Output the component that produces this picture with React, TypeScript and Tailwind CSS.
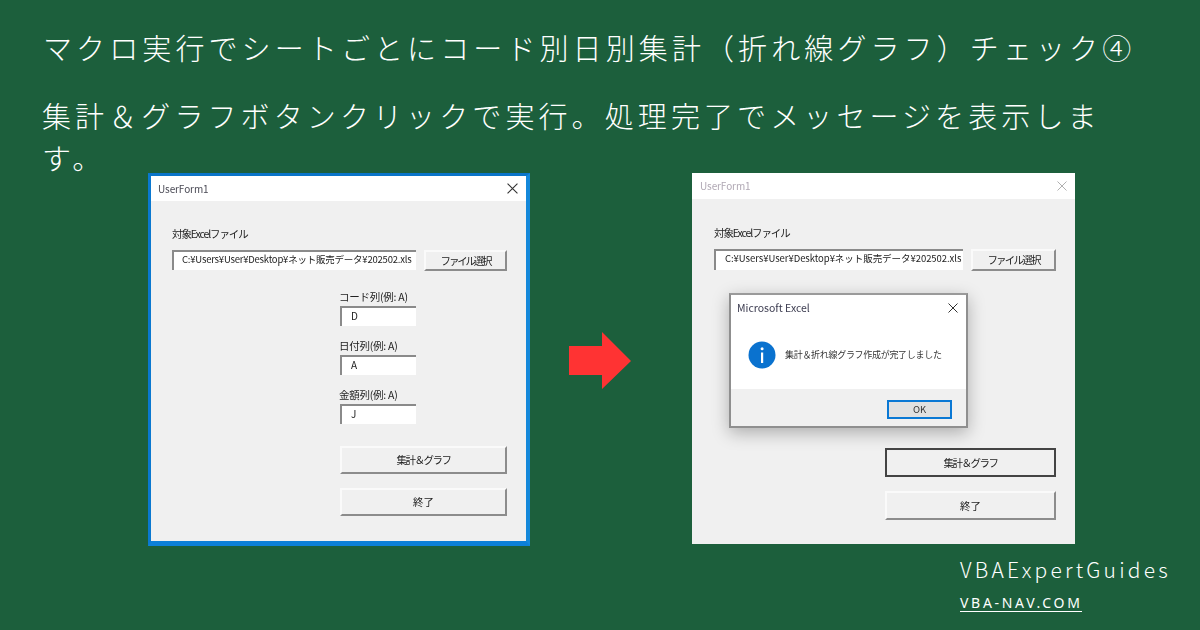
import React from "react";

const jp = "font-['Noto_Sans_CJK_JP','Noto_Sans',sans-serif]";

function Btn({ cls, label, dark }: { cls: string; label: string; dark?: boolean }) {
  return (
    <div
      className={`flex items-center justify-center bg-[#f0f0f0] text-[10.5px] text-[#222] ${
        dark
          ? "border-2 border-[#444]"
          : "border-t-2 border-l-2 border-r-2 border-b-2 border-t-[#fafafa] border-l-[#fafafa] border-r-[#8c8c8c] border-b-[#8c8c8c]"
      } ${cls}`}
    >
      {label}
    </div>
  );
}

function Field({ label, value }: { label: string; value: string }) {
  return (
    <div className="flex flex-col">
      <div className="h-[16px] text-[10.5px] leading-[16px] tracking-[-0.25px] text-[#222] whitespace-nowrap">{label}</div>
      <div className="ml-px mt-[1px] flex h-[20px] w-[76px] items-start border-t-2 border-l-2 border-t-[#8a8a8a] border-l-[#8a8a8a] bg-white pl-[9px] pt-px text-[10px] leading-[14px] text-[#222]">
        {value}
      </div>
    </div>
  );
}

function PathBox({ cls }: { cls: string }) {
  return (
    <div
      className={`overflow-hidden whitespace-nowrap border-t-2 border-l-2 border-t-[#8a8a8a] border-l-[#8a8a8a] bg-white text-[9.5px] leading-[15px] text-[#222] ${cls}`}
    >
      C:¥Users¥User¥Desktop¥ネット販売データ¥202502.xls
    </div>
  );
}

function CloseIcon({ size, color }: { size: number; color: string }) {
  return (
    <svg width={size} height={size} viewBox="0 0 10 10" fill="none" stroke={color} strokeWidth="1">
      <path d="M0.5 0.5 L9.5 9.5 M9.5 0.5 L0.5 9.5" />
    </svg>
  );
}

function LeftWindow() {
  return (
    <div className="h-[373px] w-[382px] shrink-0 border-t-[3px] border-l-[3px] border-r-[4px] border-b-[5px] border-t-[#0a74c8] border-l-[#0a78d0] border-r-[#1488da] border-b-[#0c80d8] bg-[#f0f0f0]">
      <div className="flex h-[25px] items-center justify-between bg-white pl-[7px] pr-[8px]">
        <span className="text-[10px] tracking-[-0.1px] text-[#4a4a55]">UserForm1</span>
        <CloseIcon size={11} color="#333" />
      </div>
      <div className="flex flex-col pl-[21px] pt-[26px]">
        <div className="h-[14px] text-[10.5px] leading-[14px] tracking-[-1.1px] text-[#222]">対象Excelファイル</div>
        <div className="mt-[9px] flex items-start">
          <PathBox cls="h-[20px] w-[244px] pl-[8px] tracking-[-0.22px]" />
          <Btn cls="ml-[8px] h-[21px] w-[83px] tracking-[-2.2px]" label="ファイル選択" />
        </div>
        <div className="ml-[167px] mt-[18px] flex flex-col gap-[12px]">
          <Field label="コード列(例: A)" value="D" />
          <Field label="日付列(例: A)" value="A" />
          <Field label="金額列(例: A)" value="J" />
          <Btn cls="ml-px mt-[10px] h-[28px] w-[167px] tracking-[-1.5px]" label="集計＆グラフ" />
          <Btn cls="ml-px mt-[2px] h-[28px] w-[167px]" label="終了" />
        </div>
      </div>
    </div>
  );
}

function Dialog() {
  return (
    <div className="absolute left-[37px] top-[120px] h-[135px] w-[239px] border-2 border-[#8f8f8f] border-t-[#9a9a9a] bg-white shadow-[0_5px_16px_rgba(0,0,0,0.28)]">
      <div className="flex h-[25px] items-center justify-between pl-[6px] pr-[8px]">
        <span className="text-[10.5px] text-[#3c3c50]">Microsoft Excel</span>
        <CloseIcon size={10} color="#333" />
      </div>
      <div className="flex h-[69px] items-center pl-[17px]">
        <svg width="28" height="28" viewBox="0 0 28 28">
          <circle cx="14" cy="14" r="13.5" fill="#0a72cf" />
          <rect x="13" y="11.5" width="2.2" height="10.5" fill="#fff" />
          <circle cx="14.1" cy="7.8" r="1.5" fill="#fff" />
        </svg>
        <span className="ml-[9px] whitespace-nowrap text-[9px] tracking-[-0.3px] text-[#333]">集計＆折れ線グラフ作成が完了しました</span>
      </div>
      <div className="flex h-[37px] justify-end bg-[#f0f0f0] pr-[14px] pt-[11px]">
        <div className="flex h-[19px] w-[65px] items-center justify-center border-2 border-[#0a78d4] bg-[#e1e1e1] text-[9.5px] text-[#333]">
          OK
        </div>
      </div>
    </div>
  );
}

function RightWindow() {
  return (
    <div className="relative h-[371px] w-[383px] shrink-0 bg-[#f0f0f0]">
      <div className="flex h-[26px] items-center justify-between bg-white pb-px pl-[8px] pr-[8px]">
        <span className="text-[10px] tracking-[-0.1px] text-[#b0a8b4]">UserForm1</span>
        <CloseIcon size={10} color="#b0b0b0" />
      </div>
      <div className="flex flex-col pl-[22px] pt-[27px]">
        <div className="h-[14px] text-[10.5px] leading-[14px] tracking-[-1.1px] text-[#222]">対象Excelファイル</div>
        <div className="mt-[9px] flex items-start">
          <PathBox cls="h-[21px] w-[249px] pl-[9px] tracking-[-0.05px]" />
          <Btn cls="ml-[8px] h-[22px] w-[85px] tracking-[-1.8px]" label="ファイル選択" />
        </div>
        <div className="ml-[189px] mt-[20px] h-[14px] whitespace-nowrap text-[10.5px] leading-[14px] tracking-[-1px] text-[#222]">コード列(例: A)</div>
        <div className="ml-[171px] mt-[143px] flex flex-col gap-[14px]">
          <Btn dark cls="h-[29px] w-[171px] tracking-[-1.5px]" label="集計＆グラフ" />
          <Btn cls="h-[29px] w-[171px]" label="終了" />
        </div>
      </div>
      <Dialog />
    </div>
  );
}

export default function App() {
  return (
    <div className={`flex h-[630px] w-[1200px] flex-col overflow-hidden bg-[#1c5f3c] text-white ${jp}`}>
      <div className="h-[173px] shrink-0 pl-[42px] pr-[90px]">
        <div className="mt-[25px] h-[42px] whitespace-nowrap pl-[1px] text-[29px] font-light leading-[45px] tracking-[4.1px]">
          マクロ実行でシートごとにコード別日別集計（折れ線グラフ）チェック④
        </div>
        <div className="mt-[27px] text-[29px] font-light leading-[42px] tracking-[4.1px]">
          集計＆グラフボタンクリックで実行。処理完了でメッセージを表示します。
        </div>
      </div>
      <div className="flex items-start pl-[148px]">
        <div className="blur-[0.4px]">
          <LeftWindow />
        </div>
        <svg className="ml-[39px] mt-[159px] shrink-0" width="62" height="57" viewBox="0 0 62 57">
          <polygon points="0,14 33,14 33,0 62,29 33,57 33,43 0,43" fill="#ff3333" />
        </svg>
        <div className="ml-[61px] blur-[0.4px]">
          <RightWindow />
        </div>
      </div>
      <div className="ml-[960px] mt-[8px] flex w-fit flex-col">
        <div className="text-[21px] font-light leading-[30px] tracking-[3.2px]">VBAExpertGuides</div>
        <div className="mt-[10px] w-[122px] whitespace-nowrap border-b border-white font-['Noto_Sans',sans-serif] text-[14px] leading-[17px] tracking-[2.7px]">
          VBA-NAV.COM
        </div>
      </div>
    </div>
  );
}
